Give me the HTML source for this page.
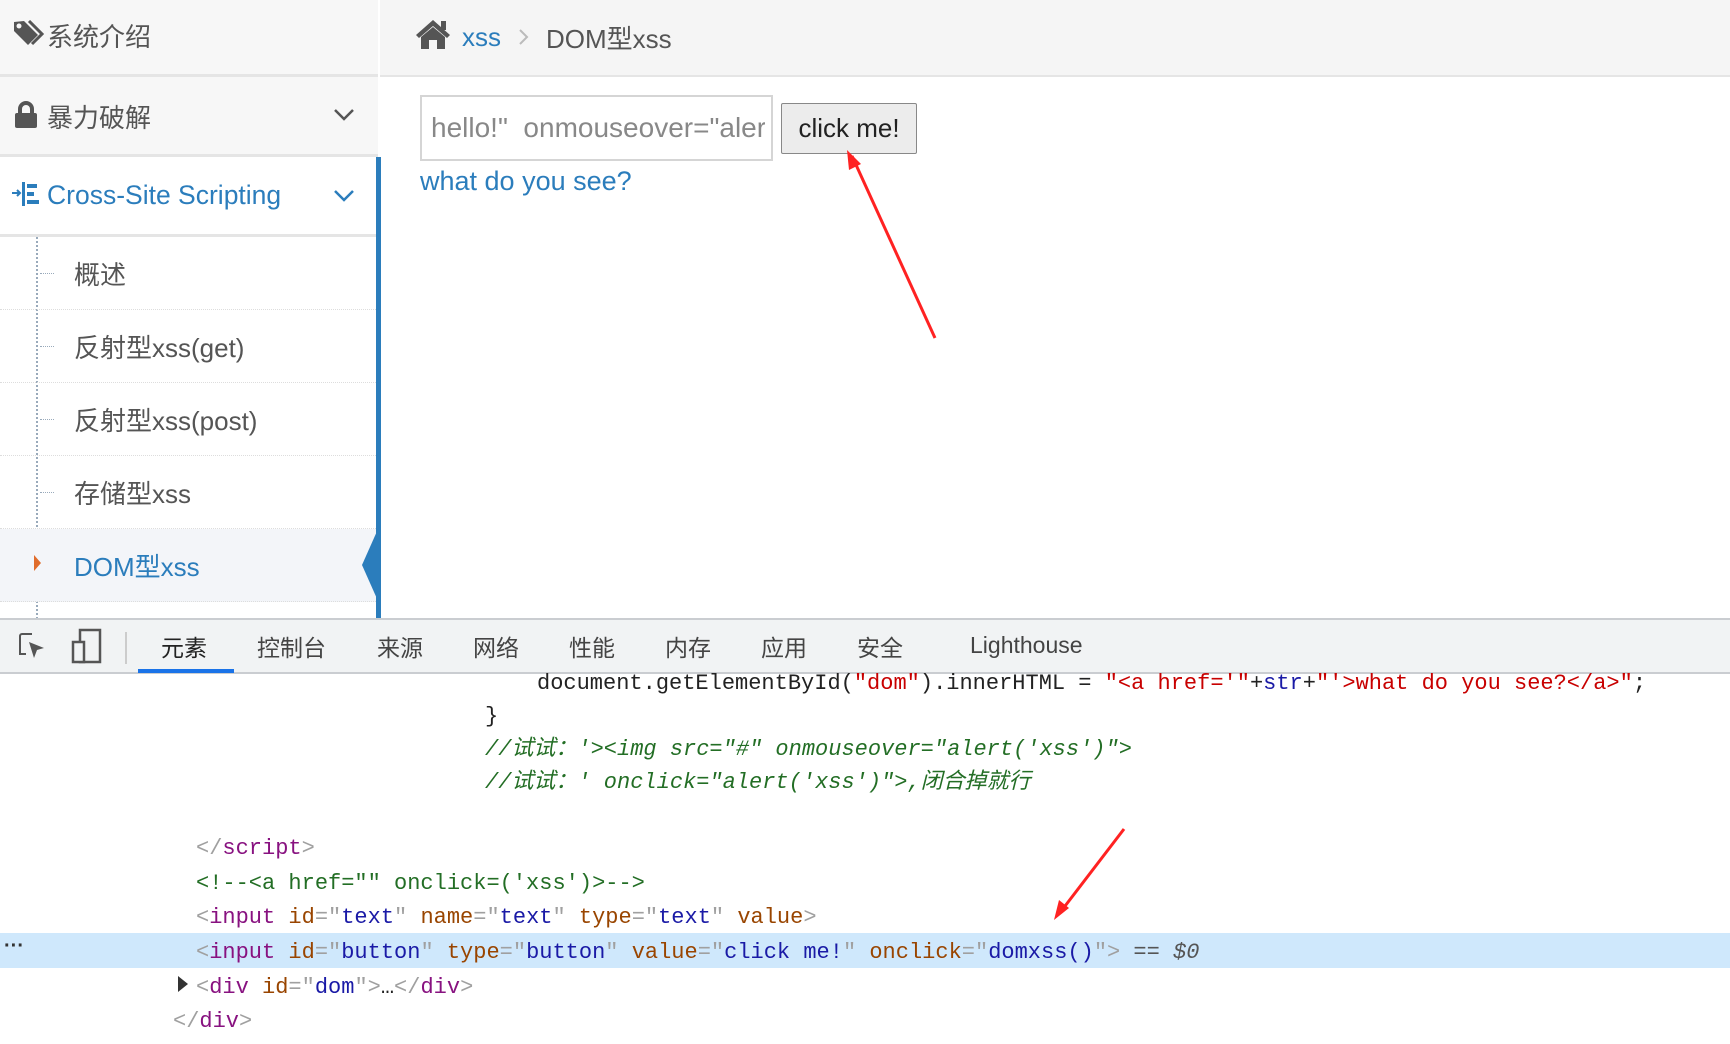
<!DOCTYPE html>
<html><head><meta charset="utf-8"><style>
*{margin:0;padding:0;box-sizing:border-box}
body{width:1730px;height:1044px;overflow:hidden;background:#fff;font-family:"Liberation Sans","Noto Sans CJK SC",sans-serif;position:relative;color:#555}
.a{position:absolute;white-space:nowrap}
.side{position:absolute;left:0;top:0;width:378px;height:619px;background:#fff;border-right:2px solid #ccc}
.row{position:absolute;left:0;width:378px;background:#f7f7f7;border-bottom:3px solid #e5e5e5}
.sub{position:absolute;left:0;width:376px;height:73px;border-bottom:1px dotted #ddd;font-size:26px;color:#555}
.sub span{position:absolute;left:74px;top:18px}
.sub i{position:absolute;left:40px;top:36px;width:14px;border-top:1px dotted #9ab}
.code{position:absolute;font-family:"Liberation Mono","Noto Sans CJK SC",monospace;font-size:22px;white-space:pre;line-height:34px}
.t{color:#881280}.n{color:#994500}.v{color:#1a1aa6}.g{color:#236e25}.p{color:#a0a0a0}.r{color:#c80000}.k{color:#222}
.tab{position:absolute;top:629px;font-size:23px;color:#444}
</style></head><body>
<div class="side">
 <div class="row" style="top:0;height:77px;border-bottom:3px solid #e5e5e5"></div>
 <div class="row" style="top:77px;height:80px"></div>
 <div class="row" style="top:157px;height:80px;background:#fff"></div>
 <div style="position:absolute;left:36px;top:237px;height:382px;border-left:2px dotted #9ab"></div>
 <div class="sub" style="top:237px"><i></i><span>概述</span></div>
 <div class="sub" style="top:310px"><i></i><span>反射型xss(get)</span></div>
 <div class="sub" style="top:383px"><i></i><span>反射型xss(post)</span></div>
 <div class="sub" style="top:456px"><i></i><span>存储型xss</span></div>
 <div class="sub" style="top:529px;background:#f3f5f9"><span style="color:#2b7dbc">DOM型xss</span></div>
 <div class="a" style="left:34px;top:555px;width:0;height:0;border-top:8px solid transparent;border-bottom:8px solid transparent;border-left:7px solid #e06c2c"></div>
</div>
<div class="a" style="left:376px;top:157px;width:5px;height:462px;background:#2b7dbc"></div>
<div class="a" style="left:362px;top:529px;width:0;height:0;border-top:36px solid transparent;border-bottom:36px solid transparent;border-right:16px solid #2b7dbc"></div>
<svg class="a" style="left:14px;top:20px" width="32" height="28" viewBox="0 0 32 28"><path d="M0 2 L0 11 L14 25 L24 15 L10 1 Z" fill="#555"/><circle cx="5" cy="6" r="2.5" fill="#f7f7f7"/><path d="M15 1 L28 14 L18 24" fill="none" stroke="#555" stroke-width="3"/></svg>
<div class="a" style="left:47px;top:17px;font-size:26px;color:#555">系统介绍</div>
<svg class="a" style="left:14px;top:101px" width="24" height="28" viewBox="0 0 24 28"><path d="M6 12 V8 a6 6 0 0 1 12 0 V12" fill="none" stroke="#555" stroke-width="4"/><rect x="1" y="12" width="22" height="15" rx="2" fill="#555"/></svg>
<div class="a" style="left:47px;top:98px;font-size:26px;color:#555">暴力破解</div>
<svg class="a" style="left:333px;top:108px" width="22" height="14"><path d="M2 2 L11 11 L20 2" fill="none" stroke="#555" stroke-width="2.5"/></svg>
<svg class="a" style="left:12px;top:181px" width="30" height="26"><path d="M0 12 H7 M5 9 L8 12 L5 15" stroke="#2b7dbc" stroke-width="2" fill="none"/><rect x="10" y="1" width="3" height="24" fill="#2b7dbc"/><rect x="15" y="3" width="10" height="4" fill="#2b7dbc"/><rect x="15" y="11" width="7" height="4" fill="#2b7dbc"/><rect x="15" y="19" width="12" height="4" fill="#2b7dbc"/></svg>
<div class="a" style="left:47px;top:180px;font-size:26.5px;color:#2b7dbc">Cross-Site Scripting</div>
<svg class="a" style="left:333px;top:189px" width="22" height="14"><path d="M2 2 L11 11 L20 2" fill="none" stroke="#2b7dbc" stroke-width="2.5"/></svg>
<div class="a" style="left:380px;top:0;width:1350px;height:77px;background:#f5f5f5;border-bottom:2px solid #e5e5e5"></div>
<svg class="a" style="left:414px;top:18px" width="38" height="32" viewBox="0 0 38 32"><path d="M19 2 L2 17 L5 20 L19 8 L33 20 L36 17 Z" fill="#555"/><rect x="27" y="3" width="5" height="9" fill="#555"/><path d="M7 19 L19 9 L31 19 V31 H23 V22 H15 V31 H7 Z" fill="#555"/></svg>
<div class="a" style="left:462px;top:22px;font-size:26px;color:#2b7dbc">xss</div>
<svg class="a" style="left:518px;top:28px" width="12" height="18"><path d="M2 2 L9 9 L2 16" fill="none" stroke="#bbb" stroke-width="2"/></svg>
<div class="a" style="left:546px;top:19px;font-size:26px;color:#555">DOM型xss</div>
<div class="a" style="left:420px;top:95px;width:353px;height:66px;border:2px solid #d5d5d5;background:#fff;overflow:hidden"><div class="a" style="left:9px;top:15px;font-size:28px;color:#888">hello!"&nbsp; onmouseover="alert</div><div class="a" style="left:343px;top:0;width:10px;height:66px;background:#fff"></div></div>
<div class="a" style="left:781px;top:103px;width:136px;height:51px;border:1px solid #888;background:#ececec;border-radius:2px;font-size:26px;color:#222;text-align:center;line-height:48px">click me!</div>
<div class="a" style="left:420px;top:166px;font-size:27px;color:#2b7dbc">what do you see?</div>
<svg class="a" style="left:0;top:0" width="1730" height="1044"><path d="M935 338 L852 156" stroke="#f22" stroke-width="3"/><path d="M847 150 L849 170 L861 164 Z" fill="#f22"/><path d="M1124 829 L1062 910" stroke="#f22" stroke-width="3"/><path d="M1054 920 L1059 900 L1069 908 Z" fill="#f22"/></svg>
<div class="a" style="left:0;top:618px;width:1730px;height:56px;background:#f1f3f4;border-top:2px solid #cacdd1;border-bottom:2px solid #cacdd1"></div>
<svg class="a" style="left:18px;top:632px" width="30" height="30"><path d="M14 2 H4 a2 2 0 0 0 -2 2 V22 H8" fill="none" stroke="#555" stroke-width="2"/><path d="M11 10 L26 16 L19 18 L16 26 Z" fill="#555"/></svg>
<svg class="a" style="left:70px;top:628px" width="34" height="36"><rect x="10" y="2" width="20" height="32" fill="none" stroke="#555" stroke-width="2.5"/><rect x="3" y="14" width="11" height="20" fill="#f1f3f4" stroke="#555" stroke-width="2.5"/></svg>
<div class="a" style="left:125px;top:632px;width:2px;height:32px;background:#ccc"></div>
<div class="tab" style="left:161px;color:#222">元素</div>
<div class="a" style="left:138px;top:669px;width:96px;height:4px;background:#1a73e8"></div>
<div class="tab" style="left:257px">控制台</div>
<div class="tab" style="left:377px">来源</div>
<div class="tab" style="left:473px">网络</div>
<div class="tab" style="left:569px">性能</div>
<div class="tab" style="left:665px">内存</div>
<div class="tab" style="left:761px">应用</div>
<div class="tab" style="left:857px">安全</div>
<div class="tab" style="left:970px;top:632px">Lighthouse</div>
<div class="a" style="left:0;top:933px;width:1730px;height:35px;background:#cfe8fc"></div>
<div class="a" style="left:4px;top:935px;font-size:20px;color:#333;font-weight:bold">···</div>
<div class="code" style="left:537px;top:667px"><span class="k">document.getElementById(</span><span class="r">"dom"</span><span class="k">).innerHTML = </span><span class="r">"&lt;a href='"</span><span class="k">+</span><span class="v">str</span><span class="k">+</span><span class="r">"'&gt;what do you see?&lt;/a&gt;"</span><span class="k">;</span></div>
<div class="code k" style="left:485px;top:700px">}</div>
<div class="code g" style="left:485px;top:733px;font-style:italic">//试试：'&gt;&lt;img src="#" onmouseover="alert('xss')"&gt;</div>
<div class="code g" style="left:485px;top:766px;font-style:italic">//试试：' onclick="alert('xss')"&gt;,闭合掉就行</div>
<div class="code" style="left:196px;top:832px"><span class="p">&lt;/</span><span class="t">script</span><span class="p">&gt;</span></div>
<div class="code g" style="left:196px;top:867px">&lt;!--&lt;a href="" onclick=('xss')&gt;--&gt;</div>
<div class="code" style="left:196px;top:901px"><span class="p">&lt;</span><span class="t">input</span> <span class="n">id</span><span class="p">="</span><span class="v">text</span><span class="p">"</span> <span class="n">name</span><span class="p">="</span><span class="v">text</span><span class="p">"</span> <span class="n">type</span><span class="p">="</span><span class="v">text</span><span class="p">"</span> <span class="n">value</span><span class="p">&gt;</span></div>
<div class="code" style="left:196px;top:936px"><span class="p">&lt;</span><span class="t">input</span> <span class="n">id</span><span class="p">="</span><span class="v">button</span><span class="p">"</span> <span class="n">type</span><span class="p">="</span><span class="v">button</span><span class="p">"</span> <span class="n">value</span><span class="p">="</span><span class="v">click me!</span><span class="p">"</span> <span class="n">onclick</span><span class="p">="</span><span class="v">domxss()</span><span class="p">"&gt;</span> <span style="color:#555">== <i>$0</i></span></div>
<div class="a" style="left:178px;top:976px;width:0;height:0;border-top:8px solid transparent;border-bottom:8px solid transparent;border-left:10px solid #333"></div>
<div class="code" style="left:196px;top:971px"><span class="p">&lt;</span><span class="t">div</span> <span class="n">id</span><span class="p">="</span><span class="v">dom</span><span class="p">"&gt;</span><span class="k">…</span><span class="p">&lt;/</span><span class="t">div</span><span class="p">&gt;</span></div>
<div class="code" style="left:173px;top:1005px"><span class="p">&lt;/</span><span class="t">div</span><span class="p">&gt;</span></div>
</body></html>
